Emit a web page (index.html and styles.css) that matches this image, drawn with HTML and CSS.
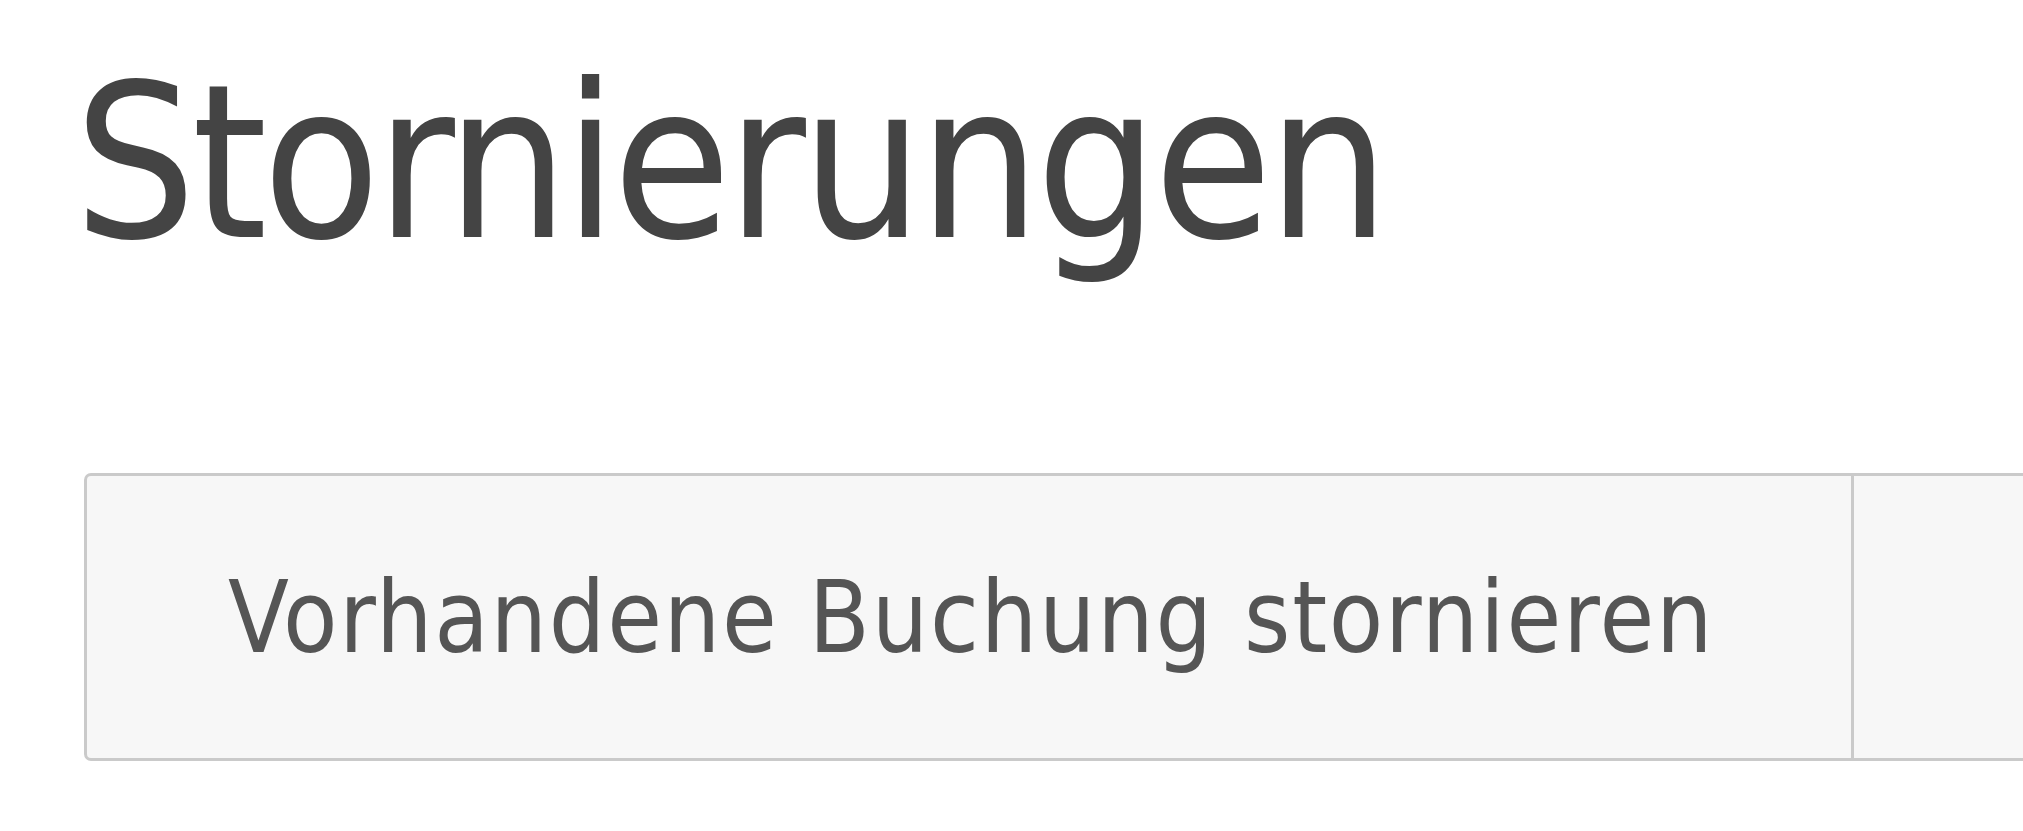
FILE: index.html
```html
<!DOCTYPE html>
<html lang="de">
<head>
    <meta charset="UTF-8">
    <meta name="viewport" content="width=device-width, initial-scale=1.0">
    <title>Stornierungen</title>
    <link rel="stylesheet" href="styles.css">
</head>
<body>

    <div class="page">
        <h1>Stornierungen</h1>

        <!-- Reiter für die Stornierungsarten -->
        <div class="tabs">
            <div class="tab">Vorhandene Buchung stornieren</div>
            <div class="tab tab-empty"></div>
        </div>
    </div>

</body>
</html>
```

FILE: styles.css
```css
body {
    margin: 0;
    background-color: #ffffff;
    font-family: "DejaVu Sans Condensed", "DejaVu Sans", Verdana, sans-serif;
    font-stretch: condensed;
    overflow: hidden;
}
.page {
    padding: 56px 0 0 84px;
    overflow: hidden;
}
h1 {
    margin: 0 0 203px -10px;
    font-size: 214px;
    font-weight: normal;
    line-height: 1;
    letter-spacing: -4.6px;
    color: #444444;
}
.tabs {
    display: flex;
    width: max-content;
    border: 3px solid #cacaca;
    border-radius: 7px;
    background-color: #f7f7f7;
}
.tab {
    display: flex;
    align-items: center;
    height: 282px;
    padding: 0 137px 0 141px;
    font-size: 99px;
    letter-spacing: 1.8px;
    color: #555555;
}
.tab + .tab {
    border-left: 3px solid #cacaca;
}
.tab-empty {
    width: 400px;
}
```
